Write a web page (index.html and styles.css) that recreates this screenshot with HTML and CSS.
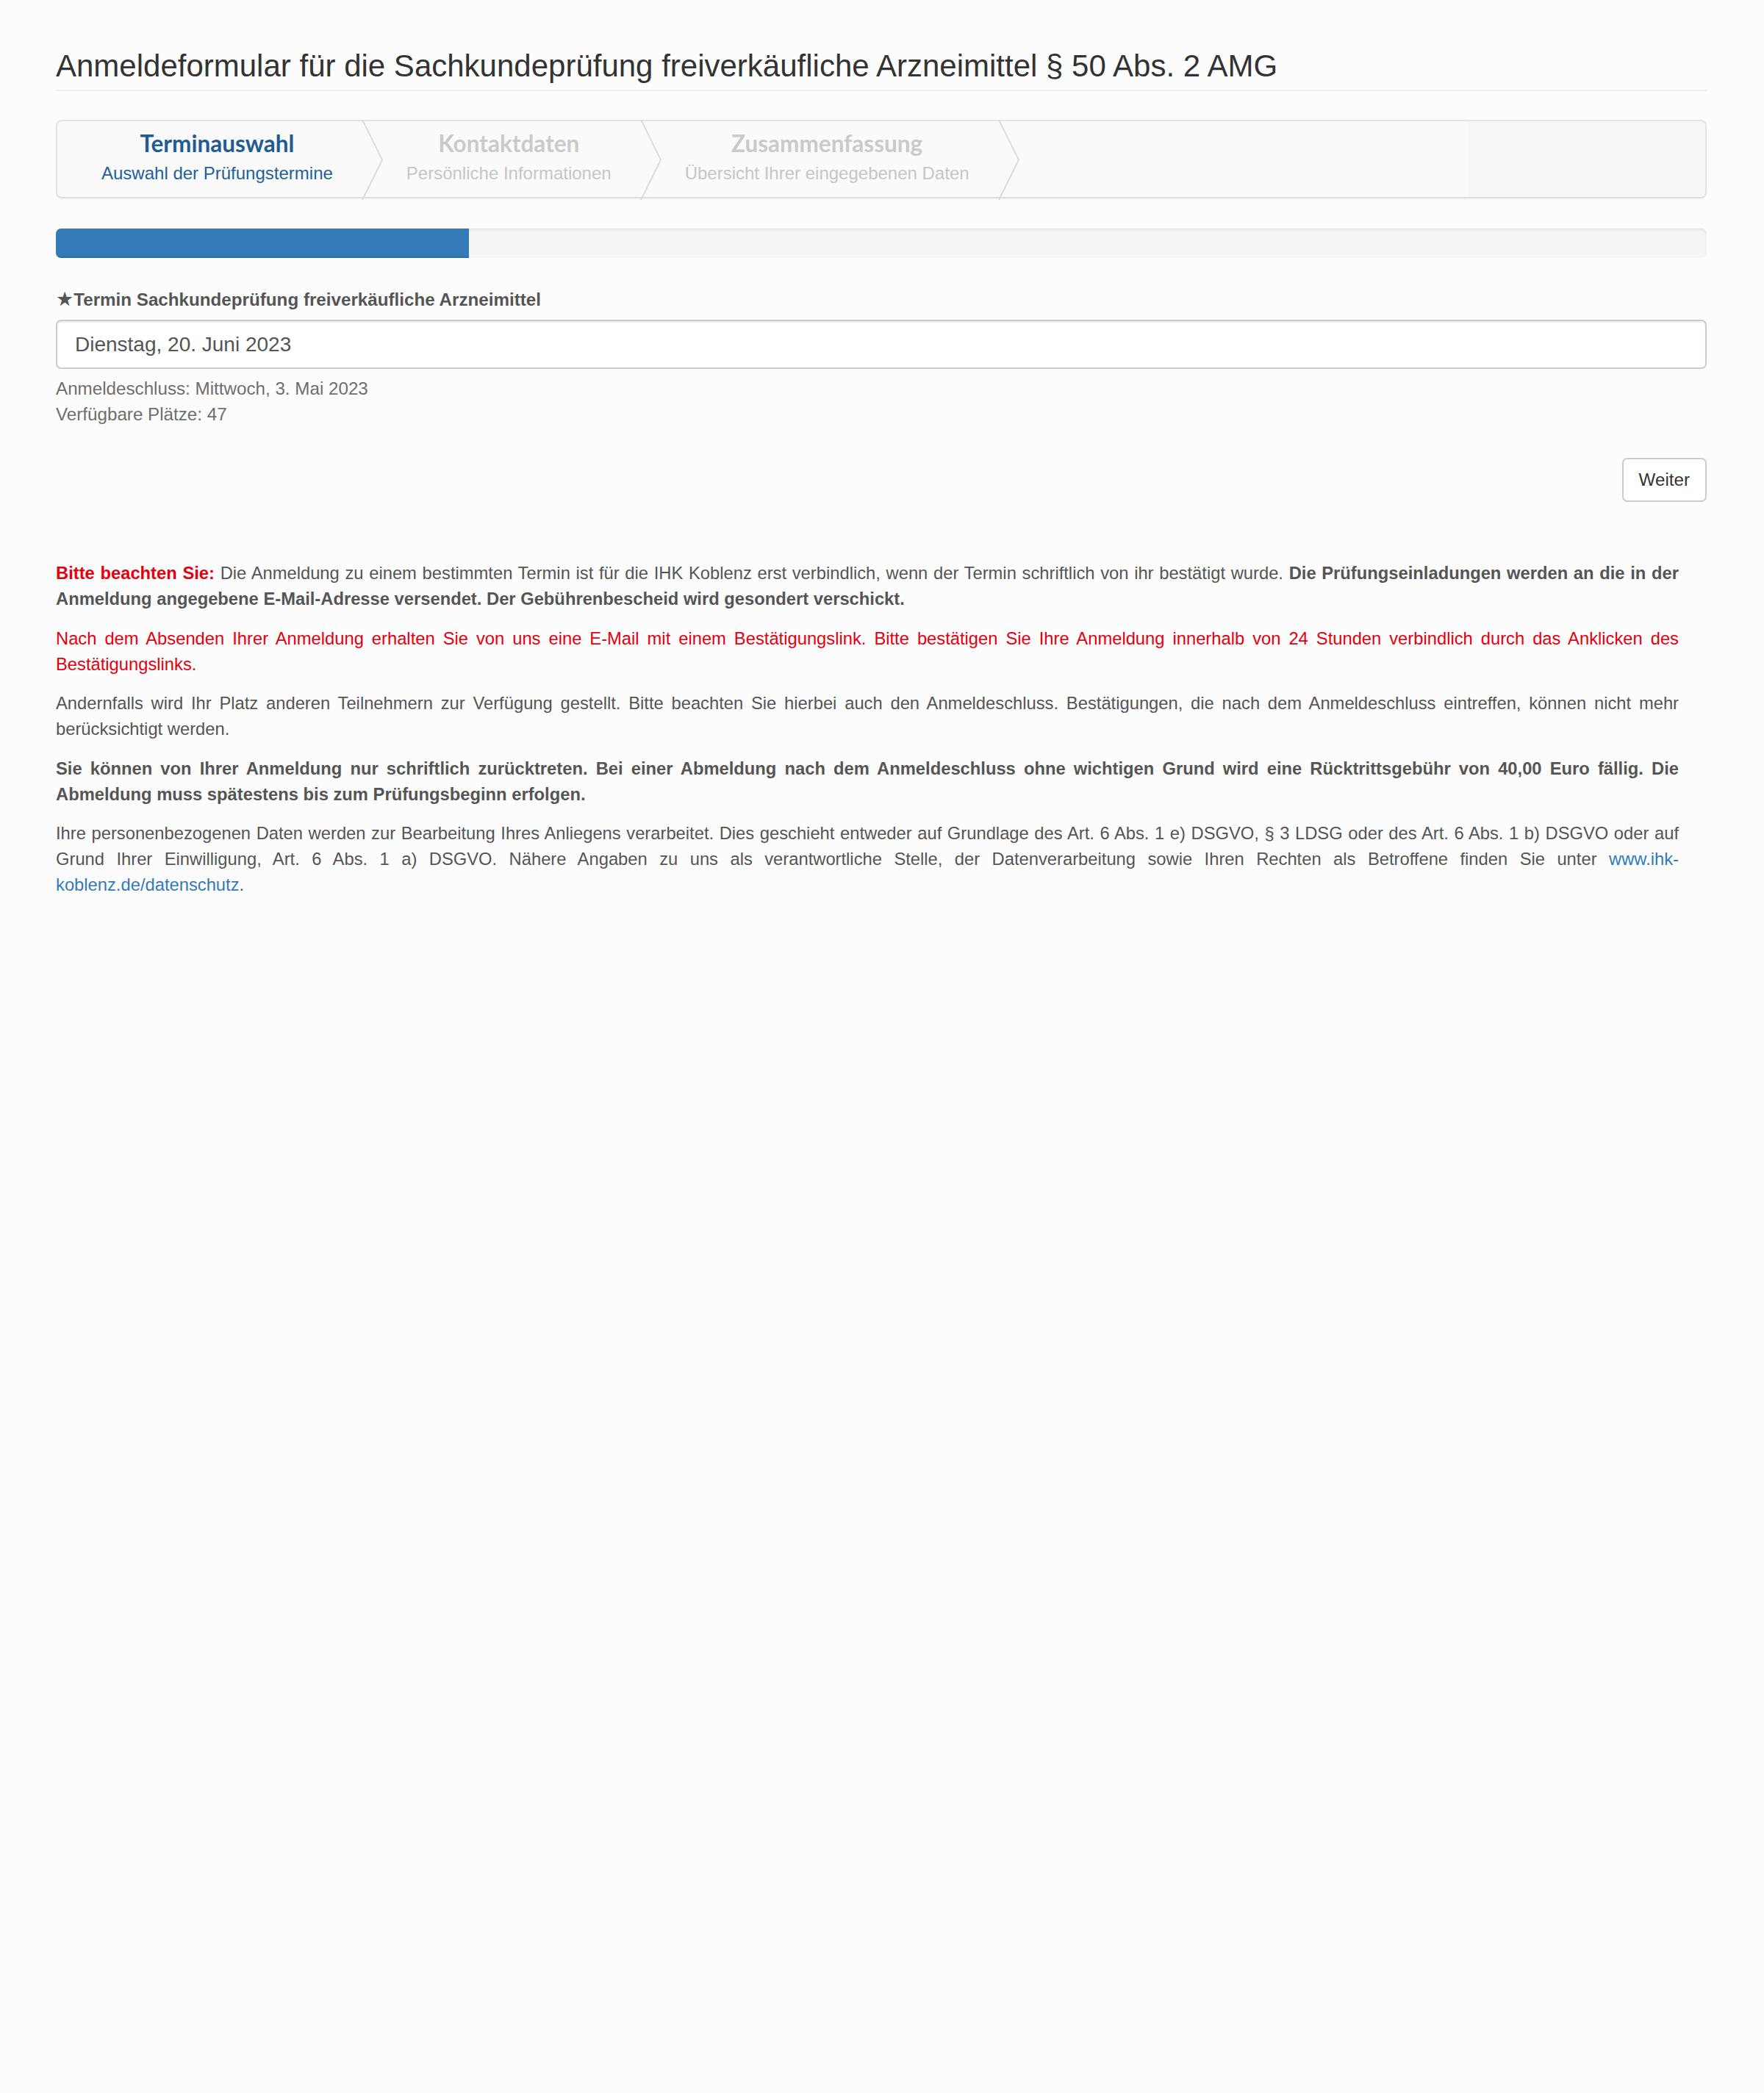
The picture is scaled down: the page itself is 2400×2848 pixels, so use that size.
FILE: index.html
```html
<!DOCTYPE html>
<html lang="de">
<head>
<meta charset="utf-8">
<title>Anmeldeformular Sachkundeprüfung</title>
<link rel="stylesheet" href="styles.css">
</head>
<body>
<div class="container">
  <div class="page-header">
    <h3>Anmeldeformular für die Sachkundeprüfung freiverkäufliche Arzneimittel § 50 Abs. 2 AMG</h3>
  </div>

  <div class="wizard">
    <ul class="steps">
      <li class="step active">
        <span class="step-title">Terminauswahl</span>
        <span class="step-sub">Auswahl der Prüfungstermine</span>
        <svg class="chevron" viewBox="0 0 30 107" preserveAspectRatio="none"><polyline points="1,0 28,53.5 1,107" fill="none" stroke="#d6d6d6" stroke-width="1.6"/></svg>
      </li>
      <li class="step">
        <span class="step-title">Kontaktdaten</span>
        <span class="step-sub">Persönliche Informationen</span>
        <svg class="chevron" viewBox="0 0 30 107" preserveAspectRatio="none"><polyline points="1,0 28,53.5 1,107" fill="none" stroke="#d6d6d6" stroke-width="1.6"/></svg>
      </li>
      <li class="step">
        <span class="step-title">Zusammenfassung</span>
        <span class="step-sub">Übersicht Ihrer eingegebenen Daten</span>
        <svg class="chevron" viewBox="0 0 30 107" preserveAspectRatio="none"><polyline points="1,0 28,53.5 1,107" fill="none" stroke="#d6d6d6" stroke-width="1.6"/></svg>
      </li>
    </ul>
    <div class="actions"></div>
  </div>

  <div class="progress"><div class="progress-bar" style="width:25%"></div></div>

  <form class="form">
    <label class="field-label"><span class="star">★</span>Termin Sachkundeprüfung freiverkäufliche Arzneimittel</label>
    <div class="field">Dienstag, 20. Juni 2023</div>
    <div class="help">Anmeldeschluss: Mittwoch, 3. Mai 2023<br>Verfügbare Plätze: 47</div>
    <div class="btn-row"><button type="button" class="btn">Weiter</button></div>
  </form>

  <div class="notes">
    <p><strong class="red">Bitte beachten Sie:</strong> Die Anmeldung zu einem bestimmten Termin ist für die IHK Koblenz erst verbindlich, wenn der Termin schriftlich von ihr bestätigt wurde. <strong>Die Prüfungseinladungen werden an die in der Anmeldung angegebene E-Mail-Adresse versendet. Der Gebührenbescheid wird gesondert verschickt.</strong></p>
    <p class="red">Nach dem Absenden Ihrer Anmeldung erhalten Sie von uns eine E-Mail mit einem Bestätigungslink. Bitte bestätigen Sie Ihre Anmeldung innerhalb von 24 Stunden verbindlich durch das Anklicken des Bestätigungslinks.</p>
    <p>Andernfalls wird Ihr Platz anderen Teilnehmern zur Verfügung gestellt. Bitte beachten Sie hierbei auch den Anmeldeschluss. Bestätigungen, die nach dem Anmeldeschluss eintreffen, können nicht mehr berücksichtigt werden.</p>
    <p><strong>Sie können von Ihrer Anmeldung nur schriftlich zurücktreten. Bei einer Abmeldung nach dem Anmeldeschluss ohne wichtigen Grund wird eine Rücktrittsgebühr von 40,00 Euro fällig. Die Abmeldung muss spätestens bis zum Prüfungsbeginn erfolgen.</strong></p>
    <p>Ihre personenbezogenen Daten werden zur Bearbeitung Ihres Anliegens verarbeitet. Dies geschieht entweder auf Grundlage des Art. 6 Abs. 1 e) DSGVO, § 3 LDSG oder des Art. 6 Abs. 1 b) DSGVO oder auf Grund Ihrer Einwilligung, Art. 6 Abs. 1 a) DSGVO. Nähere Angaben zu uns als verantwortliche Stelle, der Datenverarbeitung sowie Ihren Rechten als Betroffene finden Sie unter <a href="#">www.ihk-koblenz.de/datenschutz</a>.</p>
  </div>
</div>
</body>
</html>
```

FILE: styles.css
```css
* { box-sizing: border-box; }

html, body {
  margin: 0;
  padding: 0;
  background: #fcfcfc;
}

body {
  font-family: "Liberation Sans", Arial, Helvetica, sans-serif;
  font-size: 24.2px;
  line-height: 35px;
  color: #555;
}

.container {
  padding: 0 78px 0 76px;
}

.page-header {
  margin: 67px 0 39px;
  padding-bottom: 9px;
  border-bottom: 2px solid #eeeeee;
}

.page-header h3 {
  margin: 0;
  font-size: 42px;
  line-height: 46px;
  font-weight: normal;
  color: #333;
}

/* Wizard */
.wizard {
  display: flex;
  height: 107px;
  border: 2px solid #e4e4e4;
  border-bottom-color: #dedede;
  border-radius: 8px;
  background: #fafafa;
  box-shadow: 0 1px 3px rgba(0, 0, 0, 0.04);
}

.steps {
  list-style: none;
  margin: 0;
  padding: 0;
  flex: 1;
  display: flex;
}

.step {
  position: relative;
  display: flex;
  flex-direction: column;
  align-items: center;
  padding: 10px 40px 0 60px;
  white-space: nowrap;
}

.step-title {
  font-family: Lato, "Open Sans", sans-serif;
  font-weight: 700;
  font-size: 31.5px;
  line-height: 41px;
  color: #cacaca;
}

.step-sub {
  margin-top: 2px;
  font-size: 24px;
  line-height: 35px;
  color: #c6c6c6;
}

.step.active .step-title { color: #1f5b95; }
.step.active .step-sub { color: #22609b; }

.chevron {
  position: absolute;
  top: -2px;
  right: -29px;
  width: 30px;
  height: 109px;
  z-index: 1;
}

.actions {
  width: 322px;
  background: #f6f6f6;
  border-radius: 0 6px 6px 0;
}

/* Progress */
.progress {
  margin: 41px 0 39px;
  height: 40px;
  border-radius: 7px;
  background: #f5f5f5;
  box-shadow: inset 0 2px 3px rgba(0, 0, 0, 0.08);
  overflow: hidden;
}

.progress-bar {
  height: 100%;
  background: #337ab7;
  box-shadow: inset 0 -2px 0 rgba(0, 0, 0, 0.12);
}

/* Form */
.form { margin: 0; }

.field-label {
  display: block;
  font-weight: bold;
  line-height: 35px;
  margin-bottom: 10px;
  color: #555;
}

.star {
  font-family: "DejaVu Sans", sans-serif;
  font-weight: normal;
  font-size: 27px;
  line-height: 20px;
  color: #555;
}

.field {
  height: 67px;
  padding: 0 24px;
  display: flex;
  align-items: center;
  font-size: 28px;
  color: #555;
  background: #fff;
  border: 2px solid #cccccc;
  border-radius: 7px;
  box-shadow: inset 0 2px 2px rgba(0, 0, 0, 0.075);
}

.help {
  margin-top: 9px;
  color: #6e6e6e;
}

.btn-row {
  display: flex;
  justify-content: flex-end;
  margin-top: 42px;
}

.btn {
  height: 60px;
  padding: 0 21px;
  font-family: "Liberation Sans", Arial, sans-serif;
  font-size: 24.2px;
  color: #333;
  background: #fff;
  border: 2px solid #cccccc;
  border-radius: 7px;
}

/* Notes */
.notes {
  margin-top: 79px;
  margin-right: 38px;
  text-align: justify;
  font-size: 23.75px;
}

.notes p {
  margin: 0 0 18.5px;
}

.notes strong { font-weight: bold; }

.red { color: #e3000f; }

.notes a {
  color: #337ab7;
  text-decoration: none;
}
```
